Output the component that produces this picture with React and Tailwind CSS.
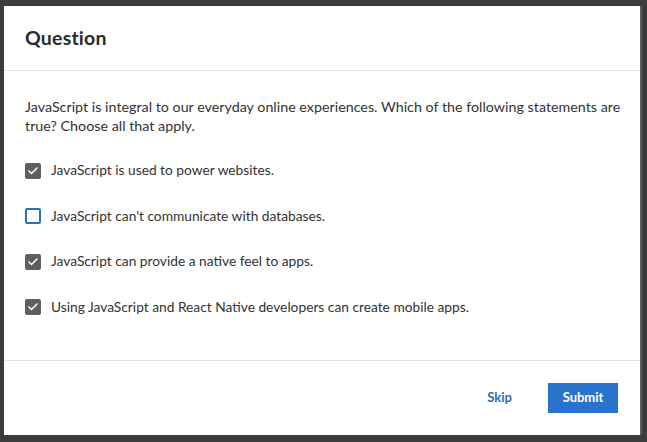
import { Check } from 'lucide-react'

const options = [
  { label: 'JavaScript is used to power websites.', checked: true },
  { label: "JavaScript can't communicate with databases.", checked: false },
  { label: 'JavaScript can provide a native feel to apps.', checked: true },
  { label: 'Using JavaScript and React Native developers can create mobile apps.', checked: true },
]

function Box({ checked }) {
  if (checked) {
    return (
      <span className="w-4 h-4 rounded-[2px] bg-[#5f5f5f] flex items-center justify-center shrink-0">
        <Check size={12} strokeWidth={3} className="text-white" />
      </span>
    )
  }
  return <span className="w-4 h-4 rounded-[2px] border-2 border-[#2f6fc5] bg-white shrink-0" />
}

export default function App() {
  return (
    <div className="w-[647px] h-[442px] bg-[#3c3c3c] pt-[6px] pl-[4px] font-['Lato',sans-serif]">
      <div className="w-[638px] h-[429px] bg-white border-r-2 border-[#5c5c5c] flex flex-col">
        <div className="h-[65px] border-b border-[#e2e2e2] flex items-center px-[21px]">
          <h1 className="text-[19.5px] font-bold text-[#2b2b2b] tracking-[0.2px]">Question</h1>
        </div>
        <div className="pl-[21px] pr-[10px] pt-[26px] flex-1 border-b border-[#e2e2e2] text-[#333]">
          <p className="leading-[19px] text-[14.3px]">
            JavaScript is integral to our everyday online experiences. Which of the following statements are true? Choose all that apply.
          </p>
          <div className="mt-[27px] flex flex-col gap-[28.5px] text-[13.75px]">
            {options.map((o) => (
              <label key={o.label} className="flex items-center gap-[10px] h-[17px]">
                <Box checked={o.checked} />
                <span>{o.label}</span>
              </label>
            ))}
          </div>
        </div>
        <div className="h-[74px] flex items-center justify-end pr-[22px] gap-[36px]">
          <button className="text-[13px] font-bold text-[#2a6ebb]">Skip</button>
          <button className="w-[70px] h-[30px] bg-[#2a73cc] text-white text-[13px] font-bold">Submit</button>
        </div>
      </div>
    </div>
  )
}
